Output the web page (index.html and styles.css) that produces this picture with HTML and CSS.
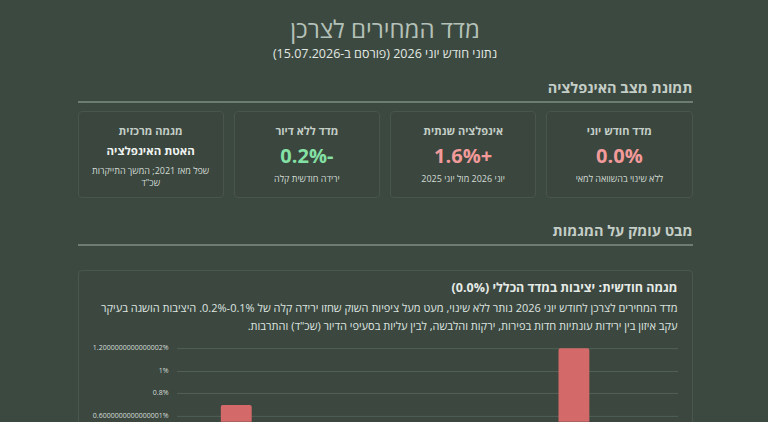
FILE: index.html
```html
<!DOCTYPE html>
<html lang="he" dir="rtl">
<head>
  <meta charset="UTF-8" />
  <title>מדד המחירים לצרכן</title>
  <link rel="stylesheet" href="styles.css">
</head>
<body>
  <div class="page">
    <header class="top">
      <h1>מדד המחירים לצרכן</h1>
      <div class="subtitle">נתוני חודש יוני 2026 (פורסם ב-15.07.2026)</div>
    </header>

    <section class="section">
      <h2>תמונת מצב האינפלציה</h2>
      <div class="cards">
        <div class="card">
          <div class="card-title">מדד חודש יוני</div>
          <div class="card-value up">0.0%</div>
          <div class="card-note">ללא שינוי בהשוואה למאי</div>
        </div>
        <div class="card">
          <div class="card-title">אינפלציה שנתית</div>
          <div class="card-value up">+1.6%</div>
          <div class="card-note">יוני 2026 מול יוני 2025</div>
        </div>
        <div class="card">
          <div class="card-title">מדד ללא דיור</div>
          <div class="card-value down">-0.2%</div>
          <div class="card-note">ירידה חודשית קלה</div>
        </div>
        <div class="card">
          <div class="card-title">מגמה מרכזית</div>
          <div class="card-text">האטת האינפלציה</div>
          <div class="card-note wide">שפל מאז 2021; המשך התייקרות שכ"ד</div>
        </div>
      </div>
    </section>

    <section class="section">
      <h2>מבט עומק על המגמות</h2>
      <div class="panel">
        <h3>מגמה חודשית: יציבות במדד הכללי (0.0%)</h3>
        <p>מדד המחירים לצרכן לחודש יוני 2026 נותר ללא שינוי, מעט מעל ציפיות השוק שחזו ירידה קלה של 0.1%-0.2%. היציבות הושגה בעיקר עקב איזון בין ירידות עונתיות חדות בפירות, ירקות והלבשה, לבין עליות בסעיפי הדיור (שכ"ד) והתרבות.</p>
        <div class="chart" dir="ltr">
          <div class="y-axis">
            <span>1.2000000000000002%</span>
            <span>1%</span>
            <span>0.8%</span>
            <span>0.6000000000000001%</span>
          </div>
          <svg class="plot" width="503" height="84" viewBox="0 0 503 84">
            <g stroke="#526156" stroke-width="1">
              <line x1="0" y1="10.5" x2="503" y2="10.5" />
              <line x1="0" y1="33.5" x2="503" y2="33.5" />
              <line x1="0" y1="55.5" x2="503" y2="55.5" />
              <line x1="0" y1="78.5" x2="503" y2="78.5" />
            </g>
            <path d="M44 84 V69 Q44 67 46 67 H73 Q75 67 75 69 V84 Z" fill="#d46969" />
            <path d="M383 84 V12 Q383 10 385 10 H412 Q414 10 414 12 V84 Z" fill="#d46969" />
          </svg>
        </div>
      </div>
    </section>
  </div>
</body>
</html>
```

FILE: styles.css
```css
body {
  margin: 0;
  background-color: #3c4940;
  color: #c9d3cc;
  font-family: "Open Sans", "Liberation Sans", sans-serif;
}
.page {
  width: 615px;
  margin: 0 auto;
  padding-left: 2px;
}
.top {
  text-align: center;
  padding-top: 12px;
}
h1 {
  margin: 0;
  font-size: 24px;
  font-weight: 400;
  line-height: 33px;
  color: #b4c1b8;
}
.subtitle {
  font-size: 12.5px;
  line-height: 17px;
  color: #e2e8e3;
}
.section {
  margin-top: 16px;
}
h2 {
  margin: 0;
  font-size: 14.5px;
  font-weight: 700;
  color: #c4cec7;
  padding-bottom: 3px;
  border-bottom: 2px solid #6d7d71;
  line-height: 20px;
}
.cards {
  display: grid;
  grid-template-columns: repeat(4, 1fr);
  gap: 10px;
  margin-top: 8px;
}
.card {
  height: 87px;
  border: 1px solid #48554c;
  border-radius: 4px;
  background-color: #3a463e;
  text-align: center;
  padding-top: 11px;
  box-sizing: border-box;
}
.card-title {
  font-size: 11px;
  font-weight: 700;
  color: #c4cec7;
  line-height: 16px;
}
.card-value {
  font-size: 20px;
  font-weight: 700;
  line-height: 26px;
  margin-top: 4px;
}
.card-value.up {
  color: #f29a9a;
}
.card-value.down {
  color: #84e0a4;
}
.card-note {
  font-size: 9px;
  line-height: 12px;
  color: #d4dcd6;
  margin-top: 4px;
  padding: 0 12px;
}
.card-note.wide {
  margin-top: 5px;
  padding: 0 8px;
}
.card-text {
  font-size: 11.5px;
  font-weight: 700;
  color: #f0f4f1;
  line-height: 18px;
  margin-top: 3px;
}
.section + .section {
  margin-top: 23px;
}
.panel {
  margin-top: 24px;
  border: 1px solid #4a574e;
  border-radius: 4px;
  background-color: #3b473f;
  padding: 8px 14px 0 14px;
  height: 160px;
  overflow: hidden;
}
h3 {
  margin: 0;
  font-size: 12.5px;
  font-weight: 700;
  color: #e6ebe7;
  line-height: 18px;
}
p {
  margin: 2px 0 0 0;
  font-size: 11px;
  line-height: 18px;
  color: #dfe5e0;
}
.chart {
  display: flex;
  margin-top: 3px;
  padding-left: 2px;
}
.y-axis {
  width: 74px;
  display: flex;
  flex-direction: column;
  align-items: flex-end;
  font-size: 7px;
  line-height: 10px;
  color: #d7ded9;
  gap: 12.7px;
  padding-top: 5px;
  white-space: nowrap;
}
.plot {
  margin-left: 8px;
}
```
